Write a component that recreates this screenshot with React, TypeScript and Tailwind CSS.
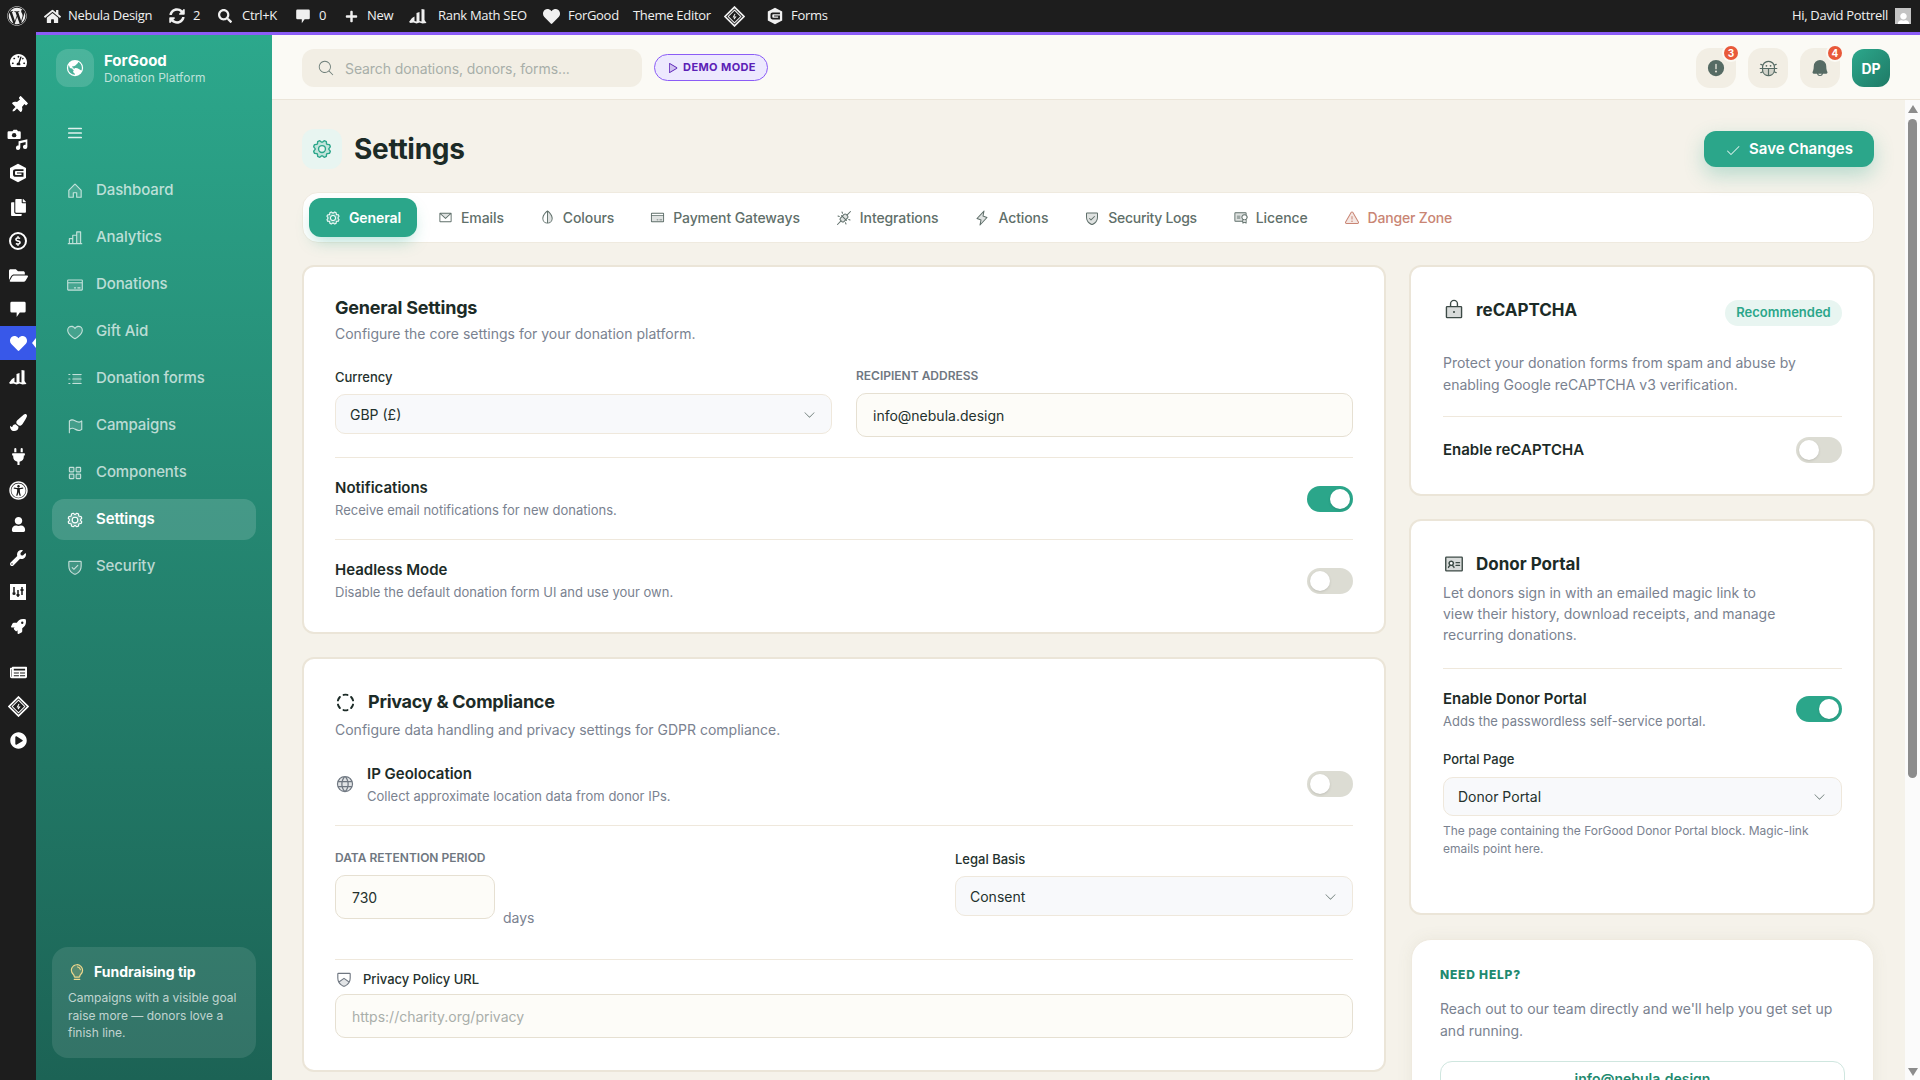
import React from "react";
import { FaTachometerAlt, FaThumbtack, FaCopy, FaFolderOpen, FaHeart, FaPaintBrush, FaPlug, FaUniversalAccess, FaUser, FaWrench, FaRocket, FaNewspaper, FaPlayCircle, FaDollarSign, FaWordpress, FaHome, FaSearch, FaPlus, FaSyncAlt } from "react-icons/fa";
import {
  PiHouseDuotone, PiChartBarDuotone, PiCreditCardDuotone, PiHeartDuotone, PiListDashesDuotone, PiFlagDuotone, PiSquaresFourDuotone, PiGearDuotone, PiShieldCheckDuotone, PiListBold,
  PiEnvelopeSimpleDuotone, PiDropHalfDuotone, PiPlugsConnectedDuotone, PiLightningDuotone, PiCertificateDuotone, PiWarningDuotone, PiLockDuotone, PiIdentificationCardDuotone, PiGlobeDuotone, PiShieldChevronDuotone, PiCircleDashedBold, PiCaretDownLight, PiBugDuotone, PiBellFill, PiWarningCircleFill, PiLightbulbDuotone, PiGlobeHemisphereWestFill, PiMagnifyingGlassLight, PiPlayDuotone, PiCheckLight,
} from "react-icons/pi";

const Bubble = ({ s = 18 }: { s?: number }) => (
  <svg width={s} height={s} viewBox="0 0 20 20" fill="currentColor"><path d="M3 2h14a1.5 1.5 0 0 1 1.5 1.5v9A1.5 1.5 0 0 1 17 14h-5l-3.5 5V14H3a1.5 1.5 0 0 1-1.5-1.5v-9A1.5 1.5 0 0 1 3 2z" /></svg>
);
const Chart = ({ s = 20 }: { s?: number }) => (
  <svg width={s} height={s} viewBox="0 0 20 20" fill="currentColor"><path d="M1 16l3-4 2.5-1.5V15l2 .5V7l3-1v9l2 .5V3l3 .5V14l2 3-4 .5-3-1-3 1-3-1-3 .5z" /></svg>
);
const Gravity = ({ s = 20 }: { s?: number }) => (
  <svg width={s} height={s} viewBox="0 0 20 20"><path fill="currentColor" d="M10 0.8l8 4.2v10l-8 4.2-8-4.2V5z" /><path fill="#1d1d1d" d="M5 8.5C5 7 6 6.2 7.5 6.2H15.5V8H8c-.7 0-1 .3-1 .8v2.4c0 .5.3.8 1 .8h5.5v-1.4H9V9.4h6.5v4.4H7.5C6 13.8 5 13 5 11.5z" /></svg>
);
const Diamond = ({ s = 21 }: { s?: number }) => (
  <svg width={s} height={s} viewBox="0 0 20 20" fill="none" stroke="currentColor"><path strokeWidth="1.6" d="M10 1l9 9-9 9-9-9z" /><path strokeWidth="1" d="M10 4l6 6-6 6-6-6z" /><path strokeWidth="1" d="M10.5 7.5L9 10.5h2L9.5 12.5" /></svg>
);
const Media = () => (
  <svg width="22" height="22" viewBox="0 0 20 20" fill="currentColor"><path d="M3 3h2l1-1.5h3L10 3h1.5A1 1 0 0 1 12.5 4v5a1 1 0 0 1-1 1H1.5a1 1 0 0 1-1-1V4a1 1 0 0 1 1-1z" /><circle cx="6.5" cy="6.5" r="2" fill="#1d1d1d" /><path d="M10.5 12l8-1.8v7a2 2 0 1 1-1.6-2v-2.4l-4.8 1v4.2a2 2 0 1 1-1.6-2z" /></svg>
);
const Sliders = () => (
  <svg width="16" height="16" viewBox="0 0 16 16"><rect width="16" height="16" fill="currentColor" /><path stroke="#1d1d1d" strokeWidth="1.5" d="M4 3v8M8 6v7M12 3v8" /><path stroke="#1d1d1d" strokeWidth="2.2" d="M2.5 9.5h3M6.5 11h3M10.5 6h3" /></svg>
);

const Circled = () => (
  <span className="flex h-[18px] w-[18px] items-center justify-center rounded-full border-2 border-white"><FaDollarSign size={10} /></span>
);

function RailItem({ children, active }: { children: React.ReactNode; active?: boolean }) {
  return (
    <div className={`relative flex h-[34px] w-full items-center justify-center text-white ${active ? "bg-[#3858e9]" : ""}`}>
      {children}
      {active && <span className="absolute right-0 top-[12px] h-0 w-0 border-y-[5px] border-r-[4px] border-y-transparent border-r-white" />}
    </div>
  );
}

function Rail() {
  return (
    <div className="flex w-[36px] shrink-0 flex-col bg-[#1d1d1d] pt-[11px] text-white">
      <RailItem><FaTachometerAlt size={17} /></RailItem>
      <div className="h-[11px]" />
      <RailItem><FaThumbtack size={17} className="rotate-45" /></RailItem>
      <RailItem><Media /></RailItem>
      <RailItem><Gravity /></RailItem>
      <RailItem><FaCopy size={17} /></RailItem>
      <RailItem><Circled /></RailItem>
      <RailItem><FaFolderOpen size={19} /></RailItem>
      <RailItem><Bubble /></RailItem>
      <RailItem active><FaHeart size={17} /></RailItem>
      <RailItem><Chart /></RailItem>
      <div className="h-[11px]" />
      <RailItem><FaPaintBrush size={17} /></RailItem>
      <RailItem><FaPlug size={17} /></RailItem>
      <RailItem><FaUniversalAccess size={19} /></RailItem>
      <RailItem><FaUser size={15} /></RailItem>
      <RailItem><FaWrench size={16} /></RailItem>
      <RailItem><Sliders /></RailItem>
      <RailItem><FaRocket size={15} /></RailItem>
      <div className="h-[12px]" />
      <RailItem><FaNewspaper size={17} /></RailItem>
      <RailItem><Diamond /></RailItem>
      <RailItem><FaPlayCircle size={17} /></RailItem>
    </div>
  );
}

function TopBar() {
  return (
    <div className="flex h-[32px] shrink-0 items-center justify-between bg-[#1d1d1d] font-['Open_Sans',sans-serif] text-[13px] tracking-[-0.3px] text-[#f0f0f0]">
      <div className="flex items-center">
        <FaWordpress size={20} className="ml-[7px] mr-[17px]" />
        <FaHome size={17} className="mr-[7px]" />
        <span className="mr-[16px] w-[84px] whitespace-nowrap">Nebula Design</span>
        <FaSyncAlt size={16} className="ml-[1px] mr-[8px]" />
        <span className="mr-[18px] w-[7px]">2</span>
        <FaSearch size={14} className="mr-[10px]" />
        <span className="mr-[17px] w-[36px] whitespace-nowrap">Ctrl+K</span>
        <Bubble s={16} />
        <span className="ml-[8px] mr-[19px] w-[7px]">0</span>
        <FaPlus size={13} className="mr-[9px]" />
        <span className="mr-[15px] w-[26px]">New</span>
        <Chart s={20} />
        <span className="ml-[10px] mr-[17px] w-[88px] whitespace-nowrap">Rank Math SEO</span>
        <FaHeart size={17} className="mr-[8px]" />
        <span className="mr-[15px] w-[50px]">ForGood</span>
        <span className="mr-[15px] w-[76px] whitespace-nowrap">Theme Editor</span>
        <Diamond />
        <span className="ml-[21px]"><Gravity s={18} /></span>
        <span className="ml-[7px]">Forms</span>
      </div>
      <div className="flex items-center pr-[9px]">
        <span className="whitespace-nowrap">Hi, David Pottrell</span>
        <span className="ml-[7px] flex h-[16px] w-[16px] items-end justify-center overflow-hidden bg-[#c4c4c4] text-white"><FaUser size={13} className="translate-y-[2px]" /></span>
      </div>
    </div>
  );
}

const navItems: [string, React.ComponentType<{ size?: number; className?: string }>][] = [
  ["Dashboard", PiHouseDuotone],
  ["Analytics", PiChartBarDuotone],
  ["Donations", PiCreditCardDuotone],
  ["Gift Aid", PiHeartDuotone],
  ["Donation forms", PiListDashesDuotone],
  ["Campaigns", PiFlagDuotone],
  ["Components", PiSquaresFourDuotone],
  ["Settings", PiGearDuotone],
  ["Security", PiShieldCheckDuotone],
];

function Sidebar() {
  return (
    <aside className="flex w-[236px] shrink-0 flex-col bg-gradient-to-b from-[#2ca88c] to-[#1c6355] px-[16px]">
      <div className="mt-[14px] flex items-center gap-[10px] pl-[4px]">
        <span className="flex h-[38px] w-[38px] items-center justify-center rounded-[12px] bg-white/15 text-white"><PiGlobeHemisphereWestFill size={20} /></span>
        <div className="flex flex-col">
          <span className="text-[15px] font-bold leading-[20px] text-white">ForGood</span>
          <span className="text-[12px] leading-[14px] text-white/70">Donation Platform</span>
        </div>
      </div>
      <PiListBold size={18} className="ml-[14px] mt-[37px] text-white/85" />
      <nav className="mt-[28px] flex flex-col gap-[6px]">
        {navItems.map(([label, Icon]) => {
          const active = label === "Settings";
          return (
            <div key={label} className={`flex h-[41px] items-center gap-[12px] rounded-[12px] pl-[14px] text-[15px] font-medium tracking-[-0.1px] ${active ? "bg-white/15 font-semibold text-white" : "text-white/70"}`}>
              <Icon size={18} />
              <span>{label}</span>
            </div>
          );
        })}
      </nav>
      <div className="mb-[22px] mt-auto h-[111px] rounded-[16px] bg-white/10 px-[16px] pt-[15px]">
        <div className="flex items-center gap-[8px]">
          <PiLightbulbDuotone size={18} className="text-[#f2d98d]" />
          <span className="text-[14px] font-bold leading-[20px] text-white">Fundraising tip</span>
        </div>
        <p className="mt-[7px] text-[12px] leading-[17.5px] text-white/70">Campaigns with a visible goal raise more — donors love a finish line.</p>
      </div>
    </aside>
  );
}

function Badge({ n }: { n: number }) {
  return <span className="absolute right-[-2px] top-[-2px] flex h-[14px] w-[14px] items-center justify-center rounded-full bg-[#e8593a] text-[10px] font-bold text-white ring-2 ring-[#fbfaf5]">{n}</span>;
}

function Header() {
  return (
    <header className="flex h-[65px] shrink-0 items-center justify-between border-b border-[#ebe5d9] bg-[#fbfaf5] pl-[30px] pr-[30px]">
      <div className="mt-[2px] flex items-center gap-[12px]">
        <div className="flex h-[38px] w-[340px] items-center gap-[10px] rounded-[12px] bg-[#f2eee4] pl-[15px] text-[14px] text-[#a8aea9]">
          <PiMagnifyingGlassLight size={18} className="text-[#6f7f7a]" />
          <span className="tracking-[-0.1px]">Search donations, donors, forms...</span>
        </div>
        <div className="mb-[1px] flex h-[27px] w-[114px] items-center justify-center gap-[5px] rounded-full border border-[#8b5cf6] bg-[#ede9fe] text-[11px] font-bold tracking-[0.4px] text-[#5b21b6]">
          <PiPlayDuotone size={12} />
          <span>DEMO MODE</span>
        </div>
      </div>
      <div className="mt-[2px] flex items-center gap-[12px] text-[#566b64]">
        <div className="relative flex h-[40px] w-[40px] items-center justify-center rounded-[14px] bg-[#f2eee4]"><PiWarningCircleFill size={20} /><Badge n={3} /></div>
        <div className="flex h-[40px] w-[40px] items-center justify-center rounded-[14px] bg-[#f2eee4]"><PiBugDuotone size={19} /></div>
        <div className="relative flex h-[40px] w-[40px] items-center justify-center rounded-[14px] bg-[#f2eee4]"><PiBellFill size={20} /><Badge n={4} /></div>
        <div className="flex h-[38px] w-[38px] items-center justify-center rounded-[12px] bg-gradient-to-br from-[#2ca88c] to-[#1f7a66] text-[14px] font-bold text-white">DP</div>
      </div>
    </header>
  );
}

const tabs: [string, React.ComponentType<{ size?: number; className?: string }>, number, string][] = [
  ["Emails", PiEnvelopeSimpleDuotone, 15, ""],
  ["Colours", PiDropHalfDuotone, 15, ""],
  ["Payment Gateways", PiCreditCardDuotone, 15, ""],
  ["Integrations", PiPlugsConnectedDuotone, 16, ""],
  ["Actions", PiLightningDuotone, 16, ""],
  ["Security Logs", PiShieldCheckDuotone, 16, "tracking-[-0.3px]"],
  ["Licence", PiCertificateDuotone, 15, ""],
];

function Tabs() {
  return (
    <div className="mt-[23px] flex h-[51px] items-center gap-[4px] rounded-[16px] border border-[#efeadf] bg-white pl-[6px] text-[14px] font-medium tracking-[-0.1px]">
      <div className="mr-[1px] flex h-[39px] w-[108px] items-center justify-center gap-[8px] rounded-[12px] bg-[#2ba68a] font-semibold text-white shadow-[0_8px_16px_-4px_rgba(43,166,138,0.35)]">
        <PiGearDuotone size={16} />General
      </div>
      {tabs.map(([label, Icon, size, cls]) => (
        <div key={label} className="flex items-center gap-[8px] whitespace-nowrap px-[16px] text-[#5f6f6a]">
          <Icon size={size} /><span className={cls}>{label}</span>
        </div>
      ))}
      <div className="flex items-center gap-[8px] whitespace-nowrap px-[16px] text-[#c98574]">
        <PiWarningDuotone size={16} /><span className="tracking-[-0.2px]">Danger Zone</span>
      </div>
    </div>
  );
}

function Toggle({ on }: { on?: boolean }) {
  return (
    <span className={`flex h-[26px] w-[46px] shrink-0 items-center rounded-full px-[3px] ${on ? "justify-end bg-[#2ba68a]" : "justify-start bg-[#dcdcd3]"}`}>
      <span className="h-[20px] w-[20px] rounded-full bg-white shadow-sm" />
    </span>
  );
}

function Select({ label, h = "h-[40px]" }: { label: string; h?: string }) {
  return (
    <div className={`flex ${h} items-center justify-between rounded-[10px] border border-[#efe8dc] bg-[#f8f9fb] pl-[14px] pr-[14px] text-[14px] text-[#24312d]`}>
      <span>{label}</span>
      <PiCaretDownLight size={15} className="text-[#5f6f6a]" />
    </div>
  );
}

function Field({ value, placeholder, className = "" }: { value?: string; placeholder?: string; className?: string }) {
  return (
    <div className={`flex h-[44px] items-center rounded-[10px] border border-[#e6e0d2] bg-[#fdfcf8] pl-[16px] text-[14px] ${placeholder ? "text-[#a9aeaa]" : "text-[#24312d]"} ${className}`}>
      {value ?? placeholder}
    </div>
  );
}

const cardCls = "rounded-[12px] border-2 border-[#ebe5d8] bg-white";
const Upper = ({ children }: { children: React.ReactNode }) => <div className="h-[16px] text-[12px] font-semibold uppercase leading-[16px] text-[#6f7781]">{children}</div>;
const Label = ({ children }: { children: React.ReactNode }) => <div className="h-[20px] text-[13px] font-medium leading-[20px] text-[#24312d]">{children}</div>;

function Row({ title, sub, className = "" }: { title: string; sub: string; className?: string }) {
  return (
    <div className={className}>
      <div className="text-[15px] font-semibold leading-[22px] text-[#1c2b27]">{title}</div>
      <div className="mt-[2px] text-[13px] leading-[18px] text-[#7a8290]">{sub}</div>
    </div>
  );
}

function LeftColumn() {
  return (
    <div className="flex w-[1084px] shrink-0 flex-col gap-[23px]">
      <section className={`${cardCls} h-[369px] px-[31px] pt-[28px]`}>
        <h2 className="text-[18px] font-bold leading-[26px] tracking-[-0.2px] text-[#1c2b27]">General Settings</h2>
        <p className="mt-[3px] text-[14px] leading-[20px] text-[#7a8290]">Configure the core settings for your donation platform.</p>
        <div className="mt-[24px] grid grid-cols-2 gap-[24px] pb-[20px]">
          <div>
            <div className="-mt-px"><Label>Currency</Label></div>
            <div className="mt-[7px]"><Select label="GBP (£)" /></div>
          </div>
          <div>
            <Upper>Recipient Address</Upper>
            <Field value="info@nebula.design" className="mt-[9px]" />
          </div>
        </div>
        <div className="flex h-[82px] items-center justify-between border-t border-[#efe8dc]">
          <Row title="Notifications" sub="Receive email notifications for new donations." className="mb-[2px]" />
          <Toggle on />
        </div>
        <div className="flex h-[82px] items-center justify-between border-t border-[#efe8dc]">
          <Row title="Headless Mode" sub="Disable the default donation form UI and use your own." className="mb-[2px]" />
          <Toggle />
        </div>
      </section>

      <section className={`${cardCls} h-[415px] px-[31px] pt-[30px]`}>
        <h2 className="flex items-center gap-[12px] text-[18px] font-bold leading-[26px] tracking-[-0.25px] text-[#1c2b27]">
          <PiCircleDashedBold size={21} />Privacy &amp; Compliance
        </h2>
        <p className="mt-[5px] text-[14px] leading-[20px] text-[#7a8290]">Configure data handling and privacy settings for GDPR compliance.</p>
        <div className="mt-[23px] flex items-center justify-between pb-[20px]">
          <div className="flex items-center gap-[12px]">
            <PiGlobeDuotone size={20} className="text-[#6f7781]" />
            <Row title="IP Geolocation" sub="Collect approximate location data from donor IPs." />
          </div>
          <Toggle />
        </div>
        <div className="flex h-[134px] justify-between border-t border-[#efe8dc] pt-[24px]">
          <div>
            <Upper>Data Retention Period</Upper>
            <div className="mt-[9px] flex items-start gap-[8px]">
              <Field value="730" className="w-[160px]" />
              <span className="mt-[33px] text-[14px] leading-[20px] text-[#7a8290]">days</span>
            </div>
          </div>
          <div className="w-[398px]">
            <div className="-mt-px"><Label>Legal Basis</Label></div>
            <div className="mt-[7px]"><Select label="Consent" /></div>
          </div>
        </div>
        <div className="border-t border-[#efe8dc] pt-[9px]">
          <div className="flex items-center gap-[10px] text-[#6f7781]">
            <PiShieldChevronDuotone size={18} />
            <Label>Privacy Policy URL</Label>
          </div>
          <Field placeholder="https://charity.org/privacy" className="mt-[5px]" />
        </div>
      </section>
    </div>
  );
}

function RightColumn() {
  return (
    <div className="flex w-[466px] shrink-0 flex-col">
      <section className={`${cardCls} h-[231px] pl-[32px] pr-[31px] pt-[30px]`}>
        <div className="flex items-start justify-between">
          <h3 className="flex items-center gap-[11px] text-[17px] font-bold leading-[26px] text-[#1c2b27]">
            <PiLockDuotone size={22} className="text-[#3c4a46]" />reCAPTCHA
          </h3>
          <span className="mt-[3px] flex h-[26px] w-[117px] items-center justify-center rounded-full bg-[#e8f5f1] text-[13px] font-semibold text-[#2ba68a]">Recommended</span>
        </div>
        <p className="mt-[26px] text-[14px] leading-[22px] text-[#7a8290]">Protect your donation forms from spam and abuse by enabling Google reCAPTCHA v3 verification.</p>
        <div className="mt-[20px] flex items-center justify-between border-t border-[#efe8dc] pt-[20px]">
          <span className="text-[15px] font-semibold text-[#1c2b27]">Enable reCAPTCHA</span>
          <Toggle />
        </div>
      </section>

      <section className={`${cardCls} mt-[23px] h-[396px] pl-[32px] pr-[31px] pt-[30px]`}>
        <h3 className="flex items-center gap-[11px] text-[17px] font-bold leading-[26px] text-[#1c2b27]">
          <PiIdentificationCardDuotone size={22} className="text-[#3c4a46]" />Donor Portal
        </h3>
        <p className="mt-[5px] w-[340px] text-[14px] leading-[21px] text-[#7a8290]">Let donors sign in with an emailed magic link to view their history, download receipts, and manage recurring donations.</p>
        <div className="mt-[23px] flex items-center justify-between border-t border-[#efe8dc] pt-[19px]">
          <Row title="Enable Donor Portal" sub="Adds the passwordless self-service portal." />
          <Toggle on />
        </div>
        <div className="mt-[19px]"><Label>Portal Page</Label></div>
        <div className="mt-[8px]"><Select label="Donor Portal" h="h-[39px]" /></div>
        <p className="mt-[6px] text-[12px] leading-[18px] text-[#7a8290]">The page containing the ForGood Donor Portal block. Magic-link emails point here.</p>
      </section>

      <section className="ml-[2px] mr-[1px] mt-[24px] h-[200px] rounded-[20px] border border-[#efeadf] bg-white px-[28px] pt-[27px] shadow-[0_0_16px_rgba(120,110,80,0.08)]">
        <div className="text-[12px] font-extrabold uppercase leading-[16px] tracking-[0.8px] text-[#1f8a70]">Need Help?</div>
        <p className="mt-[15px] text-[14px] leading-[22px] text-[#7a8290]">Reach out to our team directly and we'll help you get set up and running.</p>
        <div className="mt-[19px] flex h-[46px] items-start justify-center rounded-[12px] border border-[#cfe6df] pt-[7px] text-[14px] font-semibold leading-[20px] text-[#1f8a70]">info@nebula.design</div>
      </section>
    </div>
  );
}

function Scrollbar() {
  return (
    <div className="flex w-[15px] shrink-0 flex-col items-center justify-between bg-[#fbfbfb] pb-[4px] pt-[5px]">
      <div className="flex flex-col items-center">
        <span className="h-0 w-0 border-x-[5px] border-b-[8px] border-x-transparent border-b-[#8c8c8c]" />
        <span className="mt-[6px] h-[659px] w-[9px] rounded-full bg-[#8c8c8c]" />
      </div>
      <span className="h-0 w-0 border-x-[5px] border-t-[8px] border-x-transparent border-t-[#8c8c8c]" />
    </div>
  );
}

export default function App() {
  return (
    <div className="flex h-screen w-screen flex-col overflow-hidden font-['Inter',sans-serif]">
      <TopBar />
      <div className="flex min-h-0 flex-1">
        <Rail />
        <div className="flex min-w-0 flex-1 flex-col">
          <div className="h-[3px] shrink-0 bg-[#8b5cf6]" />
          <div className="flex min-h-0 flex-1">
            <Sidebar />
            <div className="flex min-w-0 flex-1 flex-col bg-[#f5f2ea]">
              <Header />
              <div className="flex min-h-0 flex-1">
                <main className="min-w-0 flex-1 overflow-hidden pl-[30px] pr-[31px] pt-[29px]">
                  <div className="flex h-[40px] items-center justify-between">
                    <div className="flex items-center gap-[12px]">
                      <span className="flex h-[40px] w-[40px] items-center justify-center rounded-[12px] bg-[#e8f5f1] text-[#2ba68a]"><PiGearDuotone size={22} /></span>
                      <h1 className="text-[28px] font-bold leading-[40px] tracking-[-0.3px] text-[#1c2b27]">Settings</h1>
                    </div>
                    <div className="flex h-[36px] w-[170px] items-center justify-center gap-[8px] rounded-[12px] bg-[#2ba68a] pt-[1px] text-[15px] font-semibold text-white shadow-[0_8px_20px_rgba(43,166,138,0.3)]">
                      <PiCheckLight size={16} />Save Changes
                    </div>
                  </div>
                  <Tabs />
                  <div className="mt-[22px] flex gap-[23px]">
                    <LeftColumn />
                    <RightColumn />
                  </div>
                </main>
                <Scrollbar />
              </div>
            </div>
          </div>
        </div>
      </div>
    </div>
  );
}
